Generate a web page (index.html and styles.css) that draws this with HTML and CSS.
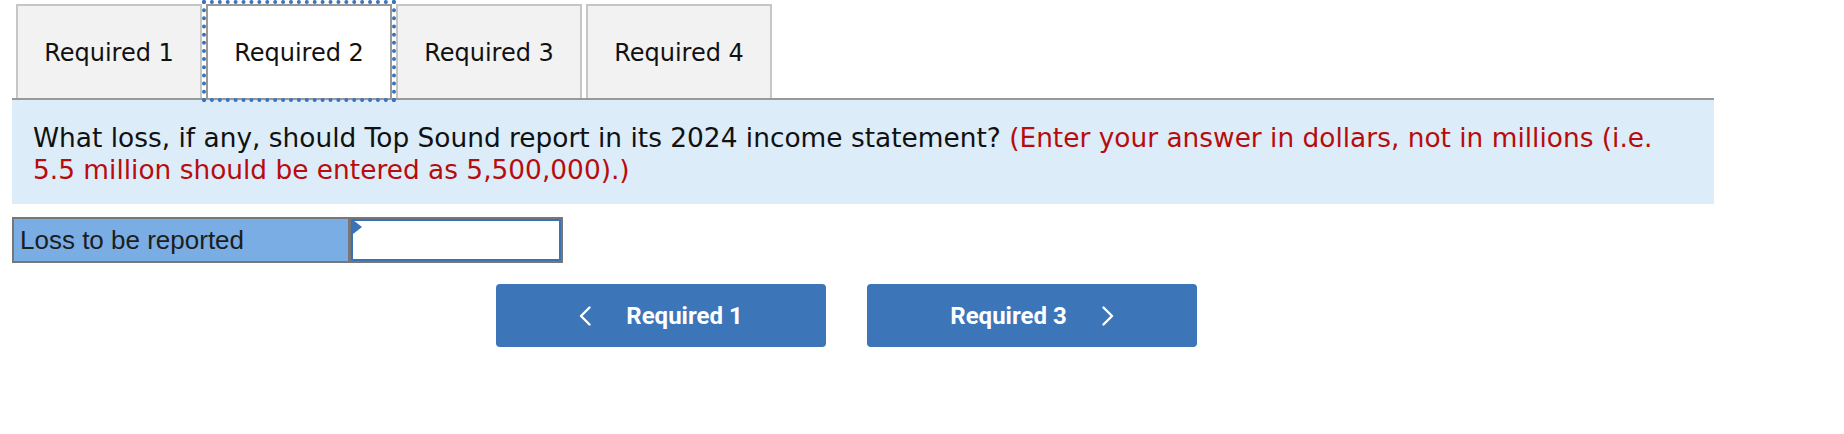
FILE: index.html
```html
<!DOCTYPE html>
<html lang="en">
<head>
<meta charset="utf-8">
<title>Required 2</title>
<link rel="stylesheet" href="styles.css">
</head>
<body>
<div class="page">
  <div class="tabs">
    <button class="tab">Required 1</button>
    <button class="tab active">Required 2</button>
    <button class="tab">Required 3</button>
    <button class="tab">Required 4</button>
  </div>
  <div class="question">What loss, if any, should Top Sound report in its 2024 income statement? <span class="hint">(Enter your answer in dollars, not in millions (i.e.<br>5.5 million should be entered as 5,500,000).)</span></div>
  <div class="answer-table">
    <div class="answer-label">Loss to be reported</div>
    <div class="answer-input"><span class="marker"></span></div>
  </div>
  <div class="nav">
    <button class="nav-btn">
      <svg class="chev" width="12" height="20" viewBox="0 0 12 20"><polyline points="10.5,1.5 2,10 10.5,18.5" fill="none" stroke="#fff" stroke-width="2.4" stroke-linecap="round" stroke-linejoin="round"/></svg>
      <span>Required 1</span>
    </button>
    <button class="nav-btn">
      <span>Required 3</span>
      <svg class="chev" width="12" height="20" viewBox="0 0 12 20"><polyline points="1.5,1.5 10,10 1.5,18.5" fill="none" stroke="#fff" stroke-width="2.4" stroke-linecap="round" stroke-linejoin="round"/></svg>
    </button>
  </div>
</div>
</body>
</html>
```

FILE: styles.css
```css
html, body {
  margin: 0;
  padding: 0;
  background: #ffffff;
}

.page {
  padding-left: 12px;
  width: 1702px;
}

.tabs {
  display: flex;
  gap: 4px;
  padding: 4px 0 0 4px;
  border-bottom: 2px solid #999999;
}

.tab {
  width: 186px;
  height: 94px;
  margin: 0;
  padding: 2px 0 0 0;
  box-sizing: border-box;
  background: #f2f2f2;
  border: 2px solid #c6c6c6;
  border-bottom: none;
  font-family: "DejaVu Sans", Verdana, sans-serif;
  font-size: 24px;
  color: #111111;
  cursor: pointer;
}

.tab.active {
  background: #ffffff;
  border-color: #999999;
  outline: 4px dotted #3b74bd;
}

.question {
  background: #dcecf8;
  padding: 22px 16px 18px 21px;
  font-family: "DejaVu Sans", Verdana, sans-serif;
  font-size: 26.4px;
  line-height: 32px;
  color: #111111;
}

.hint {
  color: #b80c0c;
}

.answer-table {
  display: flex;
  width: 551px;
  height: 46px;
  box-sizing: border-box;
  margin-top: 13px;
  border: 2px solid #777777;
}

.answer-label {
  width: 337px;
  box-sizing: border-box;
  background: #7aade3;
  border-right: 3px solid #777777;
  padding-left: 6px;
  font-family: "Liberation Sans", Arial, sans-serif;
  font-size: 26px;
  line-height: 42px;
  color: #1d1d1d;
}

.answer-input {
  flex: 1;
  position: relative;
  background: #ffffff;
  border: 2px solid #3a72b8;
}

.marker {
  position: absolute;
  left: 0;
  top: 0;
  width: 0;
  height: 0;
  border-top: 7px solid transparent;
  border-bottom: 7px solid transparent;
  border-left: 9px solid #3a72b8;
  margin-top: -1px;
}

.nav {
  display: flex;
  gap: 41px;
  margin-top: 21px;
  padding-left: 484px;
}

.nav-btn {
  width: 330px;
  height: 63px;
  margin: 0;
  padding: 0;
  border: none;
  border-radius: 4px;
  background: #3c76b9;
  color: #ffffff;
  font-family: Roboto, "Liberation Sans", sans-serif;
  font-weight: 700;
  font-size: 24px;
  display: flex;
  align-items: center;
  justify-content: center;
  gap: 35px;
  cursor: pointer;
}

.chev {
  display: block;
}
```
